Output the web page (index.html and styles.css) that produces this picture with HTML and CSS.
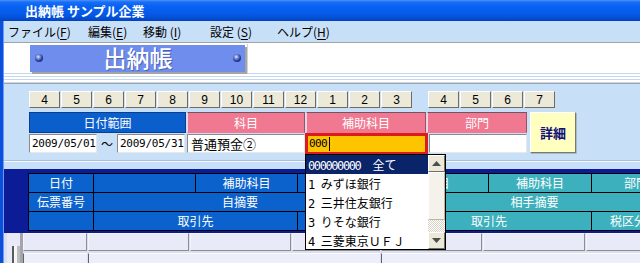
FILE: index.html
```html
<!DOCTYPE html>
<html lang="ja">
<head>
<meta charset="utf-8">
<title>出納帳</title>
<link rel="stylesheet" href="styles.css">
</head>
<body>
<div class="window">
  <div class="titlebar"><span class="title">出納帳 サンプル企業</span></div>
  <div class="frame">
    <div class="frame-edge"></div>
    <div class="client">
      <div class="menubar">
        <span class="menu m1">ファイル(<u>F</u>)</span>
        <span class="menu m2">編集(<u>E</u>)</span>
        <span class="menu m3">移動 (<u>I</u>)</span>
        <span class="menu m4">設定 (<u>S</u>)</span>
        <span class="menu m5">ヘルプ(<u>H</u>)</span>
      </div>
      <div class="banner">
        <div class="banner-main">
          <div class="logo"><span class="ball"></span><span class="logo-text">出納帳</span><span class="ball"></span></div>
          <div class="banner-rest"></div>
        </div>
        <div class="banner-stripes"></div>
      </div>
      <div class="panel">
        <div class="months">
          <div class="mgroup">
            <span class="mbtn">4</span><span class="mbtn">5</span><span class="mbtn">6</span><span class="mbtn">7</span><span class="mbtn">8</span><span class="mbtn">9</span><span class="mbtn">10</span><span class="mbtn">11</span><span class="mbtn">12</span><span class="mbtn">1</span><span class="mbtn">2</span><span class="mbtn">3</span>
          </div>
          <div class="mgroup quarter">
            <span class="mbtn">4</span><span class="mbtn">5</span><span class="mbtn">6</span><span class="mbtn">7</span>
          </div>
        </div>
        <div class="filter">
          <div class="fmain">
            <div class="frow fhead">
              <div class="hd blue w-date">日付範囲</div>
              <div class="hd pink w-kamoku">科目</div>
              <div class="hd pink w-hojo">補助科目</div>
              <div class="hd pink w-bumon">部門</div>
            </div>
            <div class="frow finputs">
              <div class="inp date">2009/05/01</div>
              <div class="tilde">〜</div>
              <div class="inp date">2009/05/31</div>
              <div class="inp kamoku">普通預金②</div>
              <div class="inp active"><span class="mono">000</span><span class="caret"></span></div>
              <div class="inp bumon"></div>
            </div>
          </div>
          <div class="detail-btn">詳細</div>
        </div>
        <div class="sep"></div>
      </div>
      <div class="grid-area">
        <div class="ghead">
          <div class="gc b">日付</div>
          <div class="gc b"></div>
          <div class="gc b">補助科目</div>
          <div class="gc b"></div>
          <div class="gc t">科目</div>
          <div class="gc t">補助科目</div>
          <div class="gc t cut1">部門</div>

          <div class="gc b">伝票番号</div>
          <div class="gc b span3">自摘要</div>
          <div class="gc t span3">相手摘要</div>

          <div class="gc b"></div>
          <div class="gc b span2">取引先</div>
          <div class="gc b"></div>
          <div class="gc t span2">取引先</div>
          <div class="gc t cut2">税区分</div>
        </div>
      </div>
      <div class="rows">
        <div class="rowhead"><div class="rh-bar"></div></div>
        <div class="dgrid">
          <div class="dc"></div><div class="dc"></div><div class="dc"></div><div class="dc"></div><div class="dc"></div><div class="dc"></div><div class="dc"></div>
          <div class="dc2"></div><div class="dc2 span3"></div><div class="dc2 span3"></div>
        </div>
      </div>
    </div>
  </div>

  <div class="dropdown">
    <div class="dd-list">
      <div class="dd-item sel"><span class="num zeros">000000000</span>　全て</div>
      <div class="dd-item"><span class="num">1 </span>みずほ銀行</div>
      <div class="dd-item"><span class="num">2 </span>三井住友銀行</div>
      <div class="dd-item"><span class="num">3 </span>りそな銀行</div>
      <div class="dd-item"><span class="num">4 </span>三菱東京ＵＦＪ</div>
    </div>
    <div class="dd-scroll">
      <div class="sb-btn"><svg width="9" height="5" viewBox="0 0 9 5"><polygon points="0,5 4.5,0 9,5" fill="#4d4d4d"/></svg></div>
      <div class="sb-thumb"></div>
      <div class="sb-track"></div>
      <div class="sb-btn"><svg width="9" height="5" viewBox="0 0 9 5"><polygon points="0,0 4.5,5 9,0" fill="#4d4d4d"/></svg></div>
    </div>
  </div>
</div>
</body>
</html>
```

FILE: styles.css
```css
* { box-sizing: border-box; }
html, body { margin: 0; padding: 0; }
body {
  width: 640px;
  height: 263px;
  overflow: hidden;
  font-family: "Noto Sans CJK JP", "Liberation Sans", sans-serif;
  font-size: 12px;
  color: #000;
  background: #c8dff8;
}
.window {
  position: relative;
  width: 640px;
  height: 263px;
  overflow: hidden;
}

/* title bar */
.titlebar {
  height: 21px;
  background: linear-gradient(#4a94fa 0, #1a6ef6 2px, #0862f2 6px, #065cec 12px, #0453dc 17px, #0347c6 20px, #033fb4 21px);
  color: #fff;
  font-weight: bold;
  font-size: 13px;
  line-height: 21px;
  padding-left: 25px;
  white-space: nowrap;
}

.frame { display: flex; height: 242px; }
.frame-edge {
  width: 4px;
  flex: none;
  background: linear-gradient(to right, #0b4fdc 0 3px, #6a9cf0 3px 4px);
}
.client {
  flex: 1;
  min-width: 0;
  overflow: hidden;
  display: flex;
  flex-direction: column;
}

/* menu */
.menubar {
  height: 22px;
  flex: none;
  background: #c8dff8;
  border-bottom: 1px solid #a3a3a3;
  display: flex;
  padding-left: 4px;
  line-height: 21px;
  white-space: nowrap;
}
.menu { display: inline-block; }
.menu u { text-decoration: underline; text-underline-offset: 2px; }
.m1 { width: 80px; }
.m2 { width: 55px; }
.m3 { width: 67px; }
.m4 { width: 67px; }

/* banner */
.banner { flex: none; }
.banner-main {
  height: 30px;
  background: #fff;
  display: flex;
  padding: 2px 0 0 26px;
}
.logo {
  width: 215px;
  height: 27px;
  background: #6e8ded;
  box-shadow: 2px 2px 0 #a4a4a4;
  display: flex;
  align-items: center;
  justify-content: space-between;
  padding: 0 4px 2px 5px;
}
.ball {
  width: 8px;
  height: 8px;
  border-radius: 50%;
  background: radial-gradient(circle at 40% 35%, #e8eeff 0, #7f94d8 25%, #253a98 60%, #0c155c 100%);
}
.logo-text {
  color: #fff;
  font-size: 23px;
  line-height: 27px;
  font-weight: 500;
  text-shadow: 1px 1px 0 rgba(30, 40, 110, 0.45);
}
.banner-rest {
  margin-left: 2px;
  flex: 1;
  border-left: 1px solid #d4d4d4;
  margin-top: -1px;
}
.banner-stripes {
  height: 11px;
  background: repeating-linear-gradient(#c4d8f2 0 1px, #fff 1px 3px);
  border-bottom: 1px solid #a3a3a3;
}

/* panel */
.panel {
  height: 85px;
  flex: none;
  background: #c8dff8;
  padding-top: 7px;
}
.months { display: flex; padding-left: 25px; }
.mgroup { display: flex; gap: 1px; }
.mgroup.quarter { margin-left: 16px; }
.mbtn {
  width: 31px;
  height: 17px;
  background: #ece9d8;
  border: 1px solid;
  border-color: #ffffff #6f6d62 #6f6d62 #ffffff;
  font-family: "Liberation Sans", sans-serif;
  font-size: 12px;
  display: flex;
  align-items: center;
  justify-content: center;
  line-height: 1;
}

.filter { display: flex; margin: 4px 0 0 25px; }
.fmain { display: flex; flex-direction: column; }
.frow { display: flex; }
.fhead { height: 21px; }
.hd {
  height: 21px;
  color: #fff;
  font-size: 12px;
  line-height: 19px;
  text-align: center;
  border: 1px solid;
}
.hd.blue {
  background: #0b5fcd;
  border-color: #0a3f90;
}
.hd.pink {
  background: #f07890;
  border-color: #6e5560 #a05064 #f07890 #ffd0da;
}
.w-date { width: 157px; margin-right: 1px; }
.w-kamoku { width: 118px; margin-right: 1px; }
.w-hojo { width: 120px; margin-right: 1px; }
.w-bumon { width: 100px; }

.finputs { height: 21px; }
.inp {
  height: 19px;
  margin-top: 1px;
  background: #fff;
  border: 1px solid;
  border-color: #8a8a8a #e8e8e8 #e8e8e8 #8a8a8a;
  line-height: 17px;
  white-space: nowrap;
  overflow: hidden;
}
.inp.date {
  width: 68px;
  font-family: "DejaVu Sans Mono", monospace;
  font-size: 11px;
  letter-spacing: -0.25px;
  padding-left: 2px;
}
.tilde {
  width: 20px;
  text-align: center;
  line-height: 21px;
  font-size: 12px;
}
.inp.kamoku {
  width: 118px;
  margin-left: 2px;
  padding-left: 3px;
  font-size: 13px;
}
.inp.active {
  width: 123px;
  height: 22px;
  margin-top: 0;
  background: #ffc400;
  border: 3px solid #dc1c1c;
  line-height: 16px;
  padding-left: 1px;
  display: flex;
  align-items: center;
}
.mono {
  font-family: "DejaVu Sans Mono", monospace;
  font-size: 11px;
  letter-spacing: -0.6px;
}
.caret {
  display: inline-block;
  width: 1px;
  height: 14px;
  background: #000;
  margin-left: 2px;
}
.inp.bumon { width: 98px; margin-left: 1px; }

.detail-btn {
  width: 46px;
  height: 41px;
  margin-left: 3px;
  background: #ffffc0;
  border: 1px solid;
  border-color: #ffffff #7a7a6a #7a7a6a #ffffff;
  box-shadow: 1px 1px 0 #a8b8c8;
  color: #10107a;
  font-size: 13px;
  font-weight: bold;
  display: flex;
  align-items: center;
  justify-content: center;
}

.sep {
  margin-top: 6px;
  height: 2px;
  border-top: 1px solid #a9bedc;
  border-bottom: 1px solid #f2f8ff;
}

/* grid header */
.grid-area {
  height: 64px;
  flex: none;
  background: #0c1c96;
  padding: 4px 0 0 24px;
}
.ghead {
  display: grid;
  grid-template-columns: 64px 101px 101px 88px 101px 102px 90px;
  grid-template-rows: 18px 18px 18px;
  gap: 1px;
  padding: 1px;
  background: #000;
  width: max-content;
}
.gc {
  color: #fff;
  font-size: 12px;
  line-height: 18px;
  text-align: center;
  white-space: nowrap;
  overflow: hidden;
}
.gc.b { background: #0b62cc; }
.gc.t { background: #3cb0bc; }
.span2 { grid-column: span 2; }
.span3 { grid-column: span 3; }
.cut1 { text-align: left; padding-left: 32px; }
.cut2 { text-align: left; padding-left: 18px; }

/* data rows */
.rows {
  flex: 1;
  display: flex;
  background: #dcdfee;
}
.rowhead {
  width: 22px;
  margin-left: 3px;
  background: #e8eaf8;
  border-right: 3px solid #a4a4ac;
  padding: 13px 0 0 5px;
}
.rh-bar {
  width: 8px;
  height: 20px;
  background: #f6f6f6;
  border-left: 2px solid #5a5a5a;
  border-right: 3px solid #bcbcbc;
}
.dgrid {
  display: grid;
  grid-template-columns: 64px 101px 101px 88px 101px 102px 90px;
  grid-template-rows: 18px 19px;
  gap: 2px 1px;
  padding: 0 1px 0 0;
  width: max-content;
}
.dc {
  background: #e8eaf8;
  border: 1px solid;
  border-color: #f4f4fc #8c8c94 #8c8c94 #f4f4fc;
}
.dc2 {
  background: #eceefa;
  border-top: 1px solid #fafaff;
  border-left: 1px solid #5f6270;
}

/* dropdown overlay */
.dropdown {
  position: absolute;
  left: 305px;
  top: 154px;
  width: 141px;
  height: 96px;
  background: #fff;
  border: 1px solid #000;
  display: flex;
}
.dd-list { width: 122px; }
.dd-item {
  height: 19px;
  line-height: 19px;
  padding-left: 2px;
  font-size: 12px;
  white-space: nowrap;
  overflow: hidden;
}
.dd-item.sel { background: #0a246a; color: #fff; }
.num {
  font-family: "DejaVu Sans Mono", monospace;
  font-size: 12px;
  letter-spacing: -0.9px;
}
.num.zeros { letter-spacing: -1.4px; }
.dd-scroll {
  width: 17px;
  display: flex;
  flex-direction: column;
}
.sb-btn {
  height: 17px;
  background: #ece9d8;
  border: 1px solid;
  border-color: #ffffff #716f64 #716f64 #ffffff;
  display: flex;
  align-items: center;
  justify-content: center;
}
.sb-thumb {
  height: 48px;
  background: #f4f2ea;
  border: 1px solid;
  border-color: #ffffff #b8b4a4 #b8b4a4 #ffffff;
}
.sb-track {
  flex: 1;
  background: repeating-conic-gradient(#ffffff 0 25%, #d6d2c6 0 50%) 0 0 / 2px 2px;
}
```
